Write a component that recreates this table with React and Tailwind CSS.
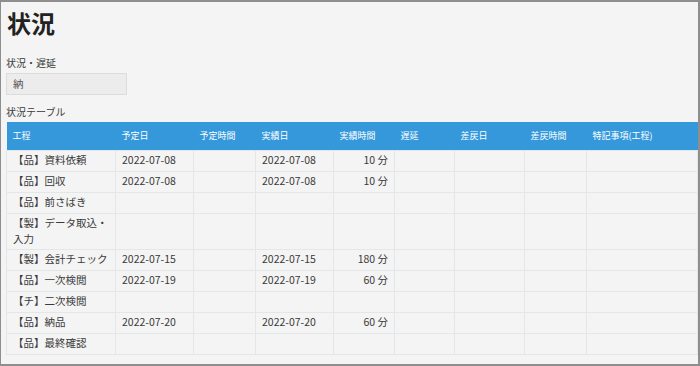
const COLS = [
  { key: "process", label: "工程", w: 109 },
  { key: "planDate", label: "予定日", w: 78 },
  { key: "planTime", label: "予定時間", w: 62 },
  { key: "actDate", label: "実績日", w: 78 },
  { key: "actTime", label: "実績時間", w: 61, right: true },
  { key: "delay", label: "遅延", w: 60 },
  { key: "backDate", label: "差戻日", w: 70 },
  { key: "backTime", label: "差戻時間", w: 62 },
  { key: "note", label: "特記事項(工程)", w: 111 },
];

const ROWS = [
  { process: "【品】資料依頼", planDate: "2022-07-08", actDate: "2022-07-08", actTime: "10 分" },
  { process: "【品】回収", planDate: "2022-07-08", actDate: "2022-07-08", actTime: "10 分" },
  { process: "【品】前さばき" },
  { process: "【製】データ取込・入力" },
  { process: "【製】会計チェック", planDate: "2022-07-15", actDate: "2022-07-15", actTime: "180 分" },
  { process: "【品】一次検閲", planDate: "2022-07-19", actDate: "2022-07-19", actTime: "60 分" },
  { process: "【チ】二次検閲" },
  { process: "【品】納品", planDate: "2022-07-20", actDate: "2022-07-20", actTime: "60 分" },
  { process: "【品】最終確認" },
];

export default function App() {
  return (
    <div
      className="w-[700px] h-[366px] box-border overflow-hidden bg-[#f4f4f4] border-t-2 border-r-2 border-b-2 border-l border-[#8e8e8e] pl-[5px] pr-[1px] pt-[6px] text-[#3a3a3a]"
      style={{ fontFamily: '"Noto Sans CJK JP", "Noto Sans", sans-serif' }}
    >
      <h1 className="text-[24px] leading-[30px] font-bold text-[#222] pl-[1px]">状況</h1>

      <div className="mt-[17px] text-[10px] leading-[16px]">状況・遅延</div>
      <div className="mt-[2px] w-[121px] h-[22px] bg-[#ececec] border border-[#dcdcdc] px-[6px] text-[10.5px] leading-[20px] text-[#555]">
        納
      </div>

      <div className="mt-[9px] text-[10px] leading-[16px]">状況テーブル</div>

      <table className="mt-[2px] w-[691px] table-fixed border-collapse text-[10.5px]">
        <colgroup>
          {COLS.map((c) => (
            <col key={c.key} style={{ width: c.w }} />
          ))}
        </colgroup>
        <thead>
          <tr className="h-[28px] bg-[#3498db] text-white">
            {COLS.map((c) => (
              <th key={c.key} className="px-[6px] text-left text-[9px] font-normal whitespace-nowrap">
                {c.label}
              </th>
            ))}
          </tr>
        </thead>
        <tbody>
          {ROWS.map((r, i) => (
            <tr key={i}>
              {COLS.map((c) => (
                <td
                  key={c.key}
                  className={
                    "h-[21px] px-[6px] py-[1px] leading-[16.5px] border border-[#e4e7e7] align-middle " +
                    (c.right ? "text-right" : "text-left")
                  }
                >
                  {r[c.key] || ""}
                </td>
              ))}
            </tr>
          ))}
        </tbody>
      </table>
    </div>
  );
}
